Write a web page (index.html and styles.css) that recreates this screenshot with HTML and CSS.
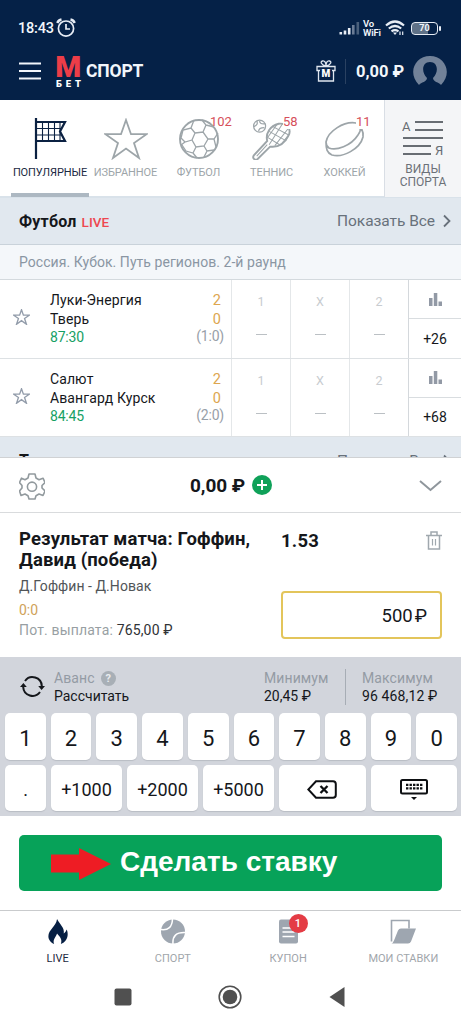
FILE: index.html
```html
<!DOCTYPE html>
<html lang="ru">
<head>
<meta charset="utf-8">
<meta name="viewport" content="width=device-width, initial-scale=1">
<title>М БЕТ Спорт</title>
<link rel="stylesheet" href="styles.css">
</head>
<body>
<div class="app">
  <header class="top">
    <div class="status">
      <span class="clock">18:43</span>
      <svg class="alarm" width="20" height="20" viewBox="0 0 20 20" fill="none" stroke="#e8edf5" stroke-width="1.7"><circle cx="10" cy="10.6" r="7.6"/><path d="M10 6v5h4"/><path d="M1.300 5Q2.500 2 5.500 1.500M18.700 5Q17.500 2 14.500 1.500" stroke-width="2.400"/></svg>
      <span class="spacer"></span>
      <svg class="signal" width="21" height="14" viewBox="0 0 21 14" fill="#e8edf5"><path d="M.5 11h2.600v2.500H.500zM4.700 9.500h2.600v4H4.700zM8.900 7h2.600v6.500H8.900z"/><path opacity=".8" d="M13 4h2.600v9.500H13z" fill="#8493aa"/><path opacity=".3" d="M17.500 1h2.600v12.500h-2.600z"/></svg>
      <span class="vowifi"><span>Vo</span><span>WiFi</span></span>
      <svg class="wifi" width="20" height="16" viewBox="0 0 20 16" fill="none" stroke="#e8edf5" stroke-width="2.200"><path d="M1 5.500Q10-2.500 19 5.500M3.800 8.500Q10 3.500 16.200 8.500M6.500 11.300Q10 8.800 13.500 11.300"/><path d="M8 12.500h4L10 15z" fill="#e8edf5" stroke="none"/><path d="M15 11.500v3.500M17.700 11.500v3.500" stroke-width="1.200"/></svg>
      <span class="battery"><span>70</span></span>
    </div>
    <div class="bar">
      <svg class="burger" width="22" height="18" viewBox="0 0 22 18" stroke="#f2f6fb" stroke-width="2"><path d="M0 1.500h22M0 9h22M0 16.500h22"/></svg>
      <svg class="logo" width="25" height="34" viewBox="0 0 25 34"><text x="-.7" y="22.500" class="logo-m" textLength="26" lengthAdjust="spacingAndGlyphs">М</text><text x="0" y="32.500" class="logo-bet" textLength="25" lengthAdjust="spacing">БЕТ</text></svg>
      <span class="brand">СПОРТ</span>
      <span class="spacer"></span>
      <svg class="gift" width="20" height="23" viewBox="0 0 20 23" fill="none" stroke="#dfe6ef" stroke-width="1.300"><path d="M1 6.500h18v4H1zM2.500 10.500V21h15V10.500M10 6C5 5 4 1.500 6.500 1S10 3 10 6c0-3 1-5.500 3.500-5S15 5 10 6"/><path class="mask" d="M4 9.500h12v8H4z"/><text x="10" y="17.300" class="gift-m" text-anchor="middle">М</text></svg>
      <span class="divider"></span>
      <span class="money">0,00 ₽</span>
      <svg class="avatar" width="34" height="30" viewBox="0 0 34 30"><path d="M6 29C-6 17 2 0 17 0s23 17 11 29c-2-3-8-3-8-7 6-6 5-16-3-16s-9 10-3 16c0 4-6 4-8 7z" fill="#728299"/></svg>
    </div>
  </header>

  <nav class="tabs">
    <div class="tab active">
      <svg width="34" height="42" viewBox="0 0 34 42" fill="none" stroke="#0b2142" stroke-width="2.200"><path d="M3 0v41M3 4h29l-5 9.500 5 9.500H3"/><path d="M9.500 4v20M15.500 4v20M21.500 4v20M27 4v20M3 10.500h26M3 17h26" stroke-width="1.100"/></svg>
      <span>ПОПУЛЯРНЫЕ</span>
    </div>
    <div class="tab">
      <svg width="44" height="42" viewBox="0 0 44 42" fill="none" stroke="#9da5a9" stroke-width="1.800"><path d="M22 2l5 14.200h15.500L30 25l5 15-13-9.400L9 40l5-15L1.500 16.200H17z"/></svg>
      <span>ИЗБРАННОЕ</span>
    </div>
    <div class="tab">
      <svg width="42" height="42" viewBox="0 0 42 42" fill="none" stroke="#9da5a9" stroke-width="1.300"><circle cx="21" cy="21" r="19" stroke-width="1.900"/><path d="M17 15l8-1 5 7-4 7-8 1-4-7zM17 15l-4-5-8 2-2 8 4 4 7-2M13 10l3-8M25 14l3-7-4-5M28 7l8 2M30 21h6l4-6M36 21l2 8M26 28l3 5 7-1M29 33l-3 6M18 29l-3 6-7-2-4-6M15 35l4 5M7 24l-4 3"/></svg>
      <b class="count">102</b>
      <span>ФУТБОЛ</span>
    </div>
    <div class="tab">
      <svg width="42" height="44" viewBox="0 0 42 44" fill="none" stroke="#9da5a9" stroke-width="1.300"><circle cx="8" cy="8.500" r="6.300"/><path d="M5 3q2 4-3 6M7 14q0-4 6-4M8 3q0 4 6 3"/><path d="M16 24c-2-8 3-16 12-18 9-1 14 6 10 13-4 8-11 12-19 11L6 43c-3 2-6-1-4-4z" stroke-width="2"/><path d="M5 40l11-12M22 9l17 9M18 14l18 10M16 20l13 8M32 6L18 28M38 11L24 29M26 7L16 21M39 17L31 27" stroke-width="1.100"/></svg>
      <b class="count halo">58</b>
      <span>ТЕННИС</span>
    </div>
    <div class="tab">
      <svg width="42" height="38" viewBox="0 0 42 38" fill="none" stroke="#9da5a9" stroke-width="1.900"><path d="M2 22C4 11 20 1 32 3c5 1 6 7 2 12C27 26 12 31 5 28q-3-2-3-6zM2 22c0 7 1 11 6 13 11 3 28-6 31-18 1-5-2-11-7-14" stroke-width="1.700"/></svg>
      <b class="count halo">11</b>
      <span>ХОККЕЙ</span>
    </div>
    <div class="kinds">
      <svg width="42" height="38" viewBox="0 0 42 38" stroke="#686d73" stroke-width="2"><path d="M13 3h28M13 11h28M1 19h40M1 27h28M1 35h28"/><text x="0" y="12" class="az">А</text><text x="33" y="36" class="az">Я</text></svg>
      <span>ВИДЫ<br>СПОРТА</span>
    </div>
  </nav>

  <section class="feed">
    <div class="sport"><b>Футбол</b><i>LIVE</i><span class="all">Показать Все</span><svg width="8" height="14" viewBox="0 0 8 14" fill="none" stroke="#68717b" stroke-width="1.800"><path d="M1 1.500l5.500 5.500L1 12.500"/></svg></div>
    <div class="league">Россия. Кубок. Путь регионов. 2-й раунд</div>
    <article class="match">
      <svg class="star" width="17" height="16" viewBox="0 0 44 42" fill="none" stroke="#929caa" stroke-width="3.500"><path d="M22 2l5 14.200h15.500L30 25l5 15-13-9.400L9 40l5-15L1.500 16.200H17z"/></svg>
      <div class="teams"><span>Луки-Энергия</span><span>Тверь</span><time>87:30</time></div>
      <div class="score"><span>2</span><span>0</span><small>(1:0)</small></div>
      <div class="odd"><span>1</span><i></i></div><div class="odd"><span>X</span><i></i></div><div class="odd"><span>2</span><i></i></div>
      <div class="more"><div><svg width="13" height="13" viewBox="0 0 13 13" fill="#9299a5"><path d="M0 5h3.500v8H0zM4.800 0h3.500v13H4.800zM9.500 8.500H13V13H9.500z"/></svg></div><div>+26</div></div>
    </article>
    <article class="match">
      <svg class="star" width="17" height="16" viewBox="0 0 44 42" fill="none" stroke="#929caa" stroke-width="3.500"><path d="M22 2l5 14.200h15.500L30 25l5 15-13-9.400L9 40l5-15L1.500 16.200H17z"/></svg>
      <div class="teams"><span>Салют</span><span>Авангард Курск</span><time>84:45</time></div>
      <div class="score"><span>2</span><span>0</span><small>(2:0)</small></div>
      <div class="odd"><span>1</span><i></i></div><div class="odd"><span>X</span><i></i></div><div class="odd"><span>2</span><i></i></div>
      <div class="more"><div><svg width="13" height="13" viewBox="0 0 13 13" fill="#9299a5"><path d="M0 5h3.500v8H0zM4.800 0h3.500v13H4.800zM9.500 8.500H13V13H9.500z"/></svg></div><div>+68</div></div>
    </article>
    <div class="sport clipped"><b>Теннис</b><i>LIVE</i><span class="all">Показать Все</span><svg width="8" height="14" viewBox="0 0 8 14" fill="none" stroke="#68717b" stroke-width="1.800"><path d="M1 1.500l5.500 5.500L1 12.500"/></svg></div>
  </section>

  <section class="wallet">
    <svg width="26" height="28" viewBox="0 0 26 28" fill="none" stroke="#929a9e" stroke-width="1.600"><path d="M10 2h6l1 4 3 1.700 4-1.500 2 4.300-3 3v2.500l3 3-2 4.500-4-1.500-3 1.700-1 3.300h-6l-1-3.300L6 22l-4 1.500L.5 19 3 16v-2.500l-2.500-3 2-4.300L6 7.700 9 6z" stroke-linejoin="round"/><circle cx="13" cy="14.700" r="4.600"/></svg>
    <div class="sum"><span>0,00 ₽</span><svg width="20" height="20" viewBox="0 0 20 20"><circle cx="10" cy="10" r="10" fill="#0fa159"/><path d="M10 5v10M5 10h10" stroke="#fff" stroke-width="2"/></svg></div>
    <svg width="23" height="12" viewBox="0 0 23 12" fill="none" stroke="#8f969c" stroke-width="2"><path d="M1 1l10.500 9L22 1"/></svg>
  </section>

  <section class="slip">
    <div class="bet">
      <h2>Результат матча: Гоффин,<br>Давид (победа)</h2>
      <p class="players">Д.Гоффин - Д.Новак</p>
      <p class="live-score">0:0</p>
      <p class="payout">Пот. выплата: <span>765,00 ₽</span></p>
    </div>
    <div class="stake">
      <div class="odds-row"><b>1.53</b><svg width="16" height="19" viewBox="0 0 16 19" fill="none" stroke="#a0a8ae" stroke-width="1.500"><path d="M0 4.500h16M2.500 5v13h11V5M5 4V1h6v3"/><path d="M6.500 8v6.500M9.500 8v6.500" stroke-width="1.200"/></svg></div>
      <div class="amount">500<span>₽</span></div>
    </div>
  </section>

  <section class="pad">
    <div class="limits">
      <svg width="25" height="21" viewBox="0 0 25 21" fill="none" stroke="#15171b" stroke-width="2"><path d="M5 5A9.300 9.300 0 0 1 21.800 10M20 16A9.300 9.300 0 0 1 3.200 11"/><path d="M18.200 10H25l-3.400 4zM0 11h6.800L3.400 7z" fill="#15171b" stroke="none"/></svg>
      <div class="advance"><span class="cap">Аванс<em>?</em></span><span>Рассчитать</span></div>
      <div class="min"><span class="cap">Минимум</span><span>20,45 ₽</span></div>
      <div class="max"><span class="cap">Максимум</span><span>96 468,12 ₽</span></div>
    </div>
    <div class="keys digits"><button>1</button><button>2</button><button>3</button><button>4</button><button>5</button><button>6</button><button>7</button><button>8</button><button>9</button><button>0</button></div>
    <div class="keys extras">
      <button>.</button><button>+1000</button><button>+2000</button><button>+5000</button>
      <button><svg width="30" height="19" viewBox="0 0 30 19" fill="none" stroke="#0d0f12" stroke-width="2"><path d="M9 1.200h17q2.800 0 2.800 2.800v11q0 2.800-2.800 2.800H9L1.300 9.500z"/><path d="M13.500 6l7 7M20.500 6l-7 7" stroke-width="2.300"/></svg></button>
      <button><svg width="28" height="21" viewBox="0 0 28 21" fill="none" stroke="#0d0f12"><rect x="1" y="1" width="26" height="13.500" rx="1.500" stroke-width="2"/><path d="M6 5.800h16.500M6 9.300h16.500" stroke-width="2.300" stroke-dasharray="2.400 1.100"/><path d="M11 18h6l-3 3z" fill="#0d0f12" stroke="none"/></svg></button>
    </div>
  </section>

  <section class="action">
    <button class="place"><svg width="60" height="32" viewBox="0 0 60 32"><path d="M0 6.500h28V0l32 16-32 16v-7.500H0z" fill="#ee1c24"/></svg><span>Сделать ставку</span></button>
  </section>

  <nav class="bottom">
    <div class="item on"><svg width="22" height="26" viewBox="0 0 22 26"><path d="M10 0c-1 8-9 11-9 18 0 4 3 7 6 8-2-5 2-7 3-11 2 3 6 5 4 11 8-3 8-11 6-15-1 2-1 3-3 4 1-6-4-9-7-15z" fill="#061f43"/></svg><span>LIVE</span></div>
    <div class="item"><svg width="24" height="25" viewBox="0 0 24 25"><circle cx="12" cy="12.500" r="12" fill="#9ea6b0"/><path d="M0 10.500Q11 12 11.500 0M24 13.500Q11 13 12 25" fill="none" stroke="#fff" stroke-width="1.500"/></svg><span>СПОРТ</span></div>
    <div class="item"><svg width="19" height="24" viewBox="0 0 19 24"><path d="M2 0h12l5 5v17q0 2-2 2H2q-2 0-2-2V2q0-2 2-2z" fill="#9ea6b0"/><path d="M3.500 8.500h10M3.500 12.500h12M3.500 17h12" stroke="#fff" stroke-width="1.400"/></svg><b class="badge">1</b><span>КУПОН</span></div>
    <div class="item"><svg width="26" height="24" viewBox="0 0 26 24"><path d="M1.500 22V1H19v8" fill="none" stroke="#9ea6b0" stroke-width="1.600"/><path d="M1.500 24q1.500-.5 2.500-3l4-10q.8-2 3-2H26l-5 13q-.8 2-3 2z" fill="#9ea6b0"/></svg><span>МОИ СТАВКИ</span></div>
  </nav>
  <div class="system">
    <svg width="18" height="18" viewBox="0 0 18 18"><rect x=".5" y=".5" width="17" height="17" rx="2" fill="#505050"/></svg>
    <svg width="24" height="24" viewBox="0 0 24 24"><circle cx="12" cy="12" r="10.800" fill="none" stroke="#505050" stroke-width="1.600"/><circle cx="12" cy="12" r="7.300" fill="#505050"/></svg>
    <svg width="16" height="20" viewBox="0 0 16 20"><path d="M.5 10L15.500 0v20z" fill="#505050"/></svg>
  </div>
</div>
</body>
</html>
```
FILE: styles.css
```css
* { box-sizing: border-box; }
body { margin: 0; background: #fff; }
.app { width: 461px; height: 1024px; overflow: hidden; font-family: Roboto, "Noto Sans", sans-serif; color: #15171b; background: #fff; display: flex; flex-direction: column; }
.app > * { flex-shrink: 0; }
svg { display: block; flex-shrink: 0; }
button { font: inherit; color: inherit; border: 0; padding: 0; }
.spacer { flex: 1; }

.top { height: 100px; background: #052147; color: #f2f6fb; }
.status { height: 45px; padding: 11px 20px 0 18px; display: flex; align-items: center; }
.clock { font-size: 14.500px; font-weight: 500; letter-spacing: -.2px; width: 38px; }
.signal { margin-right: 3px; }
.vowifi { display: flex; flex-direction: column; width: 19px; font-size: 9.500px; line-height: 9px; font-weight: 600; letter-spacing: -.2px; }
.wifi { margin: 0 6px 0 3px; }
.battery { width: 27px; height: 13px; border: 1.500px solid #e8edf5; border-radius: 4px; font-size: 9px; line-height: 10px; font-weight: 700; text-align: center; background: linear-gradient(90deg, #5f7187 65%, #052147 65%); margin-right: 3px; position: relative; }
.battery::after { content: ""; position: absolute; right: -4px; top: 3px; width: 2px; height: 5px; background: #e8edf5; border-radius: 1px; }
.bar { height: 55px; padding: 0 14px 3px 19px; display: flex; align-items: center; }
.logo { margin-left: 15px; overflow: visible; }
.logo-m { font: 900 29px Roboto, sans-serif; fill: #ec3d48; }
.logo-bet { font: 900 9.500px Roboto, sans-serif; fill: #fff; }
.brand { margin: 0 0 0 5px; font-size: 17.500px; font-weight: 700; letter-spacing: -.15px; }
.gift .mask { fill: #052147; stroke: none; }
.gift-m { font: 900 10px Roboto, sans-serif; fill: #fff; stroke: none; }
.divider { width: 1px; height: 25px; background: #2a4161; margin: 0 10px 0 9px; }
.money { font-size: 16.500px; font-weight: 700; width: 57px; white-space: nowrap; }

.tabs { height: 98px; display: grid; grid-template-columns: 78px 73px 73px 73px 73px 3px 77px; padding-left: 11px; border-bottom: 2px solid #d9e2ea; }
.tab { position: relative; display: flex; flex-direction: column; align-items: center; height: 97px; padding-top: 18px; color: #9da5a9; font-size: 11px; }
.tab svg { height: 42px; }
.tab span { margin-top: 6px; line-height: 13px; letter-spacing: -.1px; white-space: nowrap; }
.tab.active { color: #1b2a43; border-bottom: 4px solid #adb8c2; }
.count { position: absolute; left: 48px; top: 13px; font-size: 13px; line-height: 18px; font-weight: 400; color: #d64f5a; }
.halo { background: #fff; line-height: 14px; top: 15px; }
.kinds { grid-column: 7; background: #f4f5f7; border-left: 1px solid #d9dee5; padding: 19px 0 0; display: flex; flex-direction: column; align-items: center; font-size: 12px; line-height: 13px; text-align: center; color: #6c7178; }
.kinds span { margin-top: 6px; }
.az { font: 13px Roboto, sans-serif; fill: #686d73; stroke: none; }

.feed { height: 260px; overflow: hidden; border-bottom: 1px solid #d0d2d4; }
.sport { height: 47px; background: #e1e8ef; border-bottom: 1px solid #c9d2da; display: flex; align-items: center; padding: 0 10px 0 19px; font-size: 16px; }
.sport b { letter-spacing: .2px; }
.sport i { font-style: normal; font-size: 13.500px; font-weight: 500; color: #ee4750; margin: 1px 0 0 5px; }
.sport .all { margin-left: auto; margin-right: 8px; font-size: 15.500px; letter-spacing: -.05px; color: #68717b; }
.league { height: 35px; background: #f4f7fa; border-bottom: 1px solid #d4dade; padding-left: 19px; line-height: 35px; font-size: 14px; color: #8a96a3; letter-spacing: .05px; }
.match { height: 78.500px; display: grid; grid-template-columns: 50px 133px 48px 59px 59px 59px 53px; border-bottom: 1px solid #dde1e4; }
.star { margin: 29px 0 0 13px; }
.teams, .score { padding-top: 11px; display: flex; flex-direction: column; white-space: nowrap; font-size: 14px; line-height: 19px; }
.teams { letter-spacing: .1px; }
.teams time { color: #16a064; font-size: 14px; line-height: 16px; letter-spacing: -.2px; }
.score { align-items: flex-end; padding-right: 10px; color: #dda64f; font-size: 14.500px; }
.score small { font-size: 14px; line-height: 15px; color: #98a0a8; margin-right: -3px; letter-spacing: -.2px; }
.odd { border-left: 1px solid #e4e7e9; display: flex; flex-direction: column; align-items: center; padding-top: 14px; font-size: 12.500px; line-height: 16px; color: #c8ccd0; }
.odd i { width: 11px; height: 1px; background: #bbc0c4; margin-top: 24px; }
.more { border-left: 1px solid #d4d8dc; display: grid; grid-template-rows: 39px 1fr; font-size: 14px; }
.more div { display: grid; place-items: center; }
.more div + div { padding-top: 1px; }
.more div:first-child { border-bottom: 1px solid #d9dde0; }
.clipped { height: 48px; }

.wallet { height: 55px; border-bottom: 1px solid #d9dbdd; display: flex; align-items: center; justify-content: space-between; padding: 2px 19px 0; }
.sum { display: flex; align-items: center; gap: 7px; font-size: 19px; font-weight: 700; letter-spacing: -.1px; margin: -2px 2px 0 0; }

.slip { height: 144px; padding: 16px 19px 0; display: grid; grid-template-columns: 262px 161px; }
.slip h2, .slip p { margin: 0; white-space: nowrap; }
.slip h2 { font-size: 18.500px; line-height: 21px; font-weight: 700; letter-spacing: .13px; }
.players { font-size: 14px; line-height: 18px; padding-top: 6px; color: #515558; letter-spacing: .05px; }
.live-score { font-size: 14px; line-height: 18px; padding-top: 6px; color: #cfa259; }
.payout { font-size: 14px; line-height: 18px; padding-top: 2px; color: #989fa3; letter-spacing: .16px; }
.payout span { color: #303236; }
.odds-row { display: flex; justify-content: space-between; align-items: center; height: 24px; font-size: 18.500px; letter-spacing: .2px; }
.odds-row svg { margin-top: -2px; }
.amount { margin-top: 38px; height: 48px; border: 2px solid #e3c55b; border-radius: 4px; display: flex; justify-content: flex-end; align-items: center; gap: 2px; padding: 2px 13px 0 0; font-size: 18.500px; }

.pad { height: 159px; background: #d2d5dc; padding: 0 4px 0 5px; display: flex; flex-direction: column; }
.limits { height: 56px; display: grid; grid-template-columns: 34px 210px 81px 1fr; padding: 12px 0 0 15px; font-size: 14px; line-height: 18px; white-space: nowrap; }
.limits > svg { margin-top: 7px; }
.limits > div { display: flex; flex-direction: column; }
.cap { color: #949ba4; display: flex; align-items: center; height: 18px; letter-spacing: .1px; }
.cap em { font-style: normal; font-weight: 700; font-size: 11px; line-height: 15px; width: 15px; height: 15px; border-radius: 50%; background: #a8afb6; color: #e9ebee; text-align: center; margin-left: 6px; letter-spacing: 0; }
.max { border-left: 1px solid #a7adb5; padding-left: 16px; height: 36px; letter-spacing: .12px; }
.keys { display: grid; gap: 5px; }
.keys button { background: #fff; border-radius: 5px; display: grid; place-items: center; box-shadow: 0 1px 1px #b9bdc4; }
.digits { grid-template-columns: repeat(10, 1fr); height: 47px; font-size: 22px; }
.digits button { padding-top: 3px; }
.extras { grid-template-columns: 41px 71px 71px 71px 1fr 1fr; height: 46px; margin-top: 5px; font-size: 18px; }
.extras button { padding-top: 3px; }

.action { height: 95px; padding: 19px 19px 0; border-bottom: 1px solid #c9cbcd; }
.place { width: 423px; height: 56px; background: #07a259; border-radius: 5px; display: flex; align-items: center; gap: 9px; padding: 2px 0 0 32px; color: #fff; font: 700 28px "Liberation Sans", Arial, sans-serif; white-space: nowrap; }
.place span { margin-top: -4px; }

.bottom { height: 61px; display: grid; grid-template-columns: repeat(4, 1fr); }
.item { position: relative; display: flex; flex-direction: column; align-items: center; padding-top: 8px; font-size: 11px; color: #a1a6ab; }
.item svg { height: 25px; }
.item span { margin-top: 8px; line-height: 14px; }
.item.on { color: #1d2a40; }
.badge { position: absolute; left: 58px; top: 3px; width: 19px; height: 19px; border-radius: 50%; background: #e43c45; color: #fff; font-size: 11px; line-height: 19px; font-weight: 500; text-align: center; }
.system { height: 49px; display: grid; grid-template-columns: 107px 107px 107px; padding-left: 69px; align-items: center; justify-items: center; }
```
